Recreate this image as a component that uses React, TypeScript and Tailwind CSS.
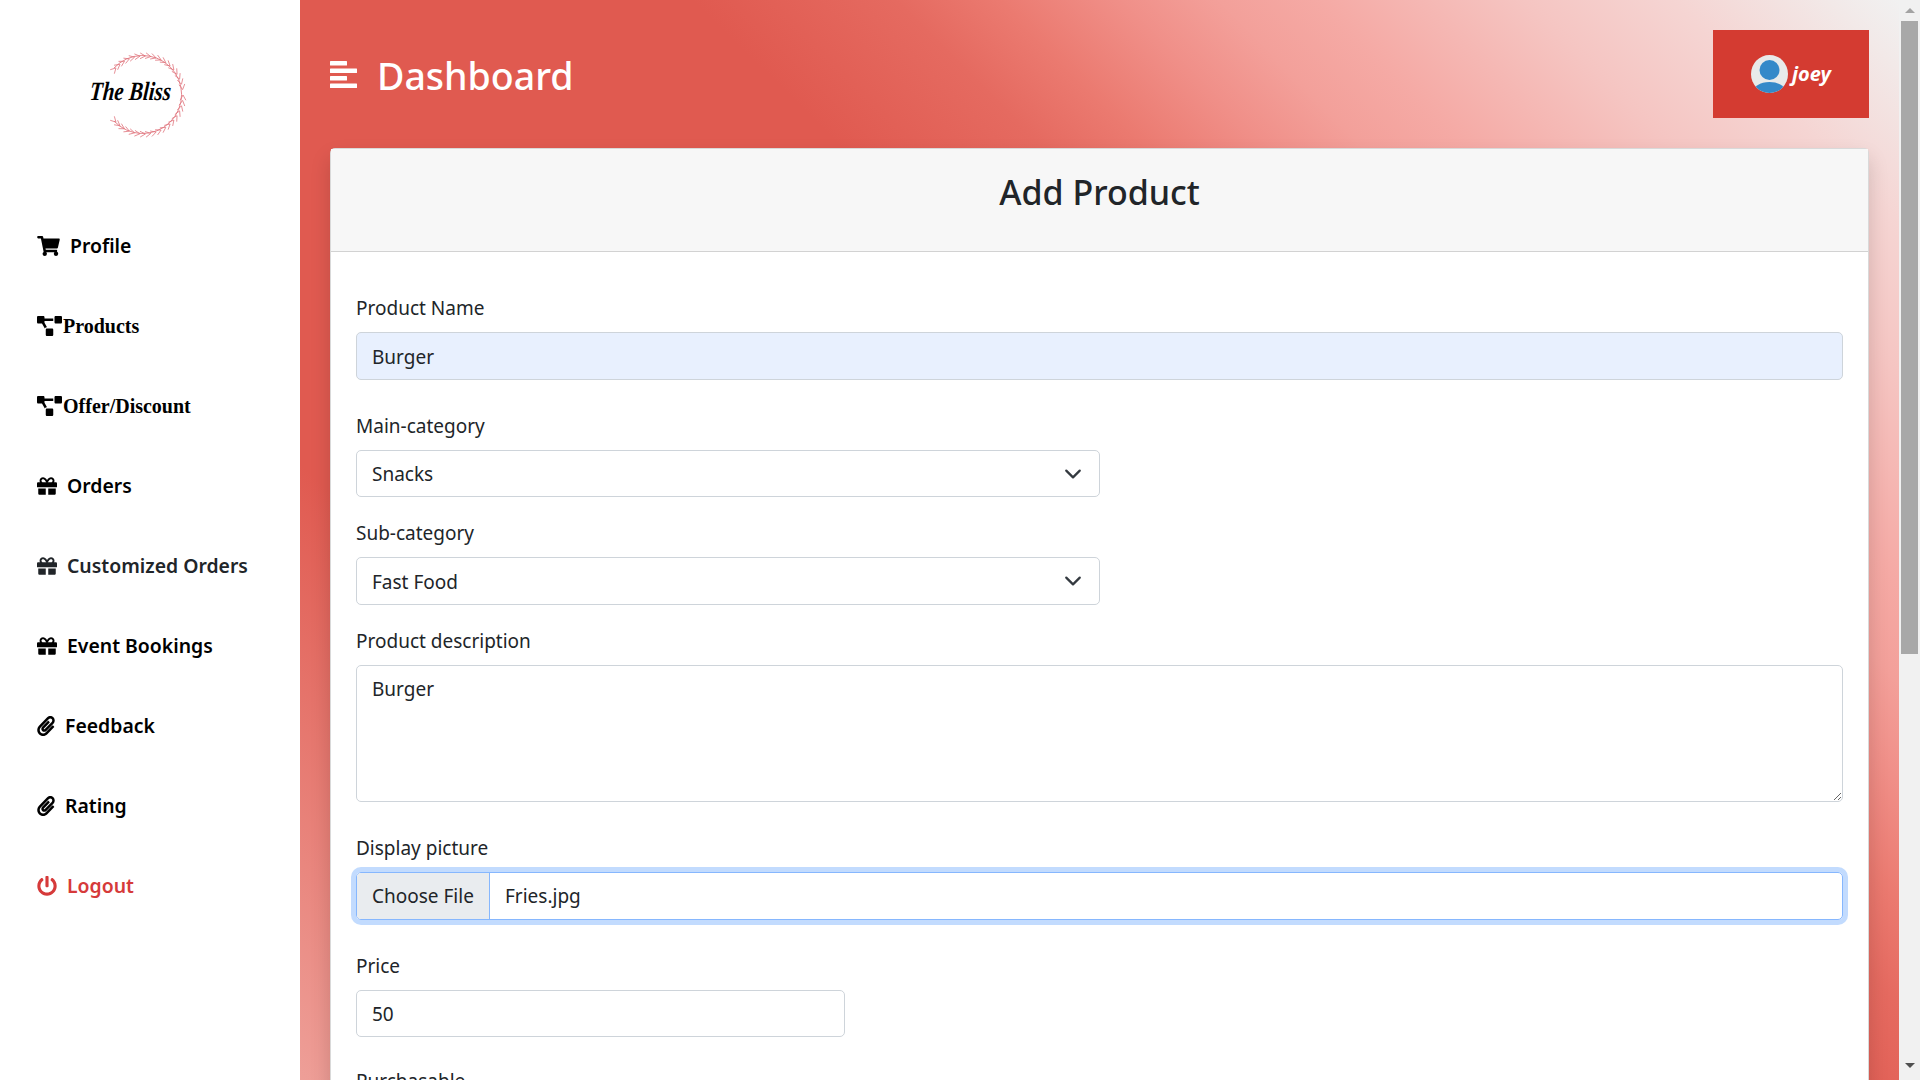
import { FaShoppingCart, FaProjectDiagram, FaGift, FaPaperclip, FaPowerOff } from "react-icons/fa";
import type { ReactNode } from "react";

const UI_FONT = "font-['Noto_Sans',sans-serif]";

// sidebar entries, top to bottom
const NAV = [
  { label: "Profile", icon: <FaShoppingCart className="w-[23px] h-[20px]" />, gap: "gap-[10px]" },
  { label: "Products", icon: <FaProjectDiagram className="w-[25px] h-[20px]" />, gap: "gap-[1px]", serif: true },
  { label: "Offer/Discount", icon: <FaProjectDiagram className="w-[25px] h-[20px]" />, gap: "gap-[1px]", serif: true },
  { label: "Orders", icon: <FaGift className="w-[20px] h-[20px]" />, gap: "gap-[10px]" },
  { label: "Customized Orders", icon: <FaGift className="w-[20px] h-[20px]" />, gap: "gap-[10px]", tone: "text-[#212529]" },
  { label: "Event Bookings", icon: <FaGift className="w-[20px] h-[20px]" />, gap: "gap-[10px]" },
  { label: "Feedback", icon: <FaPaperclip className="w-[18px] h-[20px]" />, gap: "gap-[10px]" },
  { label: "Rating", icon: <FaPaperclip className="w-[18px] h-[20px]" />, gap: "gap-[10px]" },
  { label: "Logout", icon: <FaPowerOff className="w-[20px] h-[20px]" />, gap: "gap-[10px]", tone: "text-[#d63a3a]" },
];

function Wreath() {
  // two branches that start at the right side and grow toward the open left side
  const leaves = [];
  for (let a = -46; a <= 228; a += 8) {
    const r = (a * Math.PI) / 180;
    const px = 54 + 39 * Math.sin(r);
    const py = 45 - 39 * Math.cos(r);
    const back = a < 90 ? Math.PI : 0;
    const len = a % 16 === 0 ? 9 : 6;
    [0.5, -0.5].forEach((s) => {
      const t = r + back + s;
      leaves.push(
        <line key={`${a}${s}`} x1={px} y1={py} x2={px + len * Math.cos(t)} y2={py + len * Math.sin(t)} stroke="#e0747c" strokeWidth="0.8" />
      );
    });
  }
  return (
    <svg viewBox="0 0 100 90" className="absolute inset-0 w-full h-full">
      <path d="M24 18 A39 39 0 1 1 24 71" fill="none" stroke="#d9535d" strokeWidth="0.7" />
      {leaves}
    </svg>
  );
}

function Logo() {
  return (
    <div className="relative w-[100px] h-[90px] ml-[90px]">
      <Wreath />
      <span className="absolute left-0 top-[31px] whitespace-nowrap font-['Liberation_Serif',serif] italic font-bold text-[21px] leading-none text-black -skew-x-6 scale-y-125">
        The Bliss
      </span>
    </div>
  );
}

function Field({ label, mb, children }: { label: string; mb: string; children: ReactNode }) {
  return (
    <div className={mb}>
      <label className="block text-[19px] leading-[30px] mb-[9px] text-[#212529]">{label}</label>
      {children}
    </div>
  );
}

const inputCls = "block w-full h-[47.5px] px-[15px] pt-[2px] text-[19px] text-[#212529] border border-[#ced4da] rounded-[5px] bg-white outline-none";

function SelectBox({ value }: { value: string }) {
  return (
    <div className="relative w-[744px]">
      <select className={`${inputCls} appearance-none`} defaultValue={value}>
        <option>{value}</option>
      </select>
      <svg viewBox="0 0 16 16" className="absolute right-[18px] top-[15px] w-[18px] h-[18px] pointer-events-none">
        <path d="M2 5l6 6 6-6" fill="none" stroke="#343a40" strokeWidth="2" strokeLinecap="round" strokeLinejoin="round" />
      </svg>
    </div>
  );
}

export default function App() {
  return (
    <div className={`flex h-screen overflow-hidden bg-white ${UI_FONT}`}>
      <aside className="w-[300px] shrink-0 bg-white flex flex-col">
        <div className="pt-[50px] h-[206px]">
          <Logo />
        </div>
        <nav className="flex flex-col pl-[37px]">
          {NAV.map((n) => (
            <a key={n.label} className={`flex items-center h-[80px] ${n.tone ?? "text-black"} ${n.gap}`}>
              {n.icon}
              <span className={n.serif ? "font-['Liberation_Serif',serif] font-bold text-[20px]" : "font-semibold text-[19.4px]"}>
                {n.label}
              </span>
            </a>
          ))}
        </nav>
      </aside>

      <main className="flex-1 min-w-0 px-[30px] bg-[linear-gradient(45deg,#ee9f98_0%,#e05a50_23%,#e05a50_55%,#e56a60_62.5%,#eb7a70_66.4%,#f08f88_70.8%,#f3a09a_74.6%,#f5aaa5_78.4%,#f5c5c2_86%,#f5d5d3_91.7%,#f2e9e8_97.4%,#f1f1f1_100%)]">
        <header className="h-[148px] flex justify-between items-start">
          <div className="flex items-center gap-[20px] h-[148px]">
            <svg viewBox="0 0 27 27" className="w-[27px] h-[27px] text-white" fill="currentColor">
              <rect x="0" y="0" width="17" height="4.5" rx="0.5" />
              <rect x="0" y="7.5" width="27" height="4.5" rx="0.5" />
              <rect x="0" y="15" width="17" height="4.5" rx="0.5" />
              <rect x="0" y="22.5" width="27" height="4.5" rx="0.5" />
            </svg>
            <h1 className="text-[37.5px] font-medium text-white leading-none pt-[3px]">Dashboard</h1>
          </div>
          <button className="mt-[30px] w-[156px] h-[88px] bg-[#d43b31] flex items-center justify-center gap-[4px] text-white">
            <svg viewBox="0 0 37 38" className="w-[37px] h-[38px]">
              <defs>
                <clipPath id="av">
                  <ellipse cx="18.5" cy="19" rx="18.5" ry="19" />
                </clipPath>
              </defs>
              <g clipPath="url(#av)">
                <rect width="37" height="38" fill="#e8eaea" />
                <circle cx="18.5" cy="15" r="10" fill="#3489c9" />
                <ellipse cx="18.5" cy="38" rx="17" ry="11" fill="#3489c9" />
              </g>
            </svg>
            <span className="italic font-bold text-[20px]">joey</span>
          </button>
        </header>

        <section className="bg-white border border-black/15 rounded-[5px] shadow-[0_10px_20px_rgba(0,0,0,0.15)]">
          <div className="h-[103px] bg-[#f7f7f7] border-b border-black/15 flex items-center justify-center pb-[17px]">
            <h3 className="text-[34px] font-medium text-[#212529] leading-none">Add Product</h3>
          </div>
          <form className="px-[25px] pt-[41px]">
            <Field label="Product Name" mb="mb-[31px]">
              <input readOnly value="Burger" className={`${inputCls} !bg-[#e8f0fe]`} />
            </Field>
            <Field label="Main-category" mb="mb-[21px]">
              <SelectBox value="Snacks" />
            </Field>
            <Field label="Sub-category" mb="mb-[21px]">
              <SelectBox value="Fast Food" />
            </Field>
            <Field label="Product description" mb="mb-[31px]">
              <textarea readOnly value="Burger" className="block w-full h-[137px] px-[15px] pt-[9px] pb-[7px] text-[19px] text-[#212529] border border-[#ced4da] rounded-[5px] outline-none" />
            </Field>
            <Field label="Display picture" mb="mb-[31px]">
              <div className="flex h-[48px] border border-[#86b7fe] rounded-[5px] shadow-[0_0_0_5px_rgba(13,110,253,0.25)] overflow-hidden text-[19px] text-[#212529]">
                <span className="w-[133px] shrink-0 whitespace-nowrap bg-[#e9ecef] border-r border-[#86b7fe] flex items-center pl-[15px] pt-[2px]">Choose File</span>
                <span className="flex items-center pl-[15px] pt-[2px]">Fries.jpg</span>
              </div>
            </Field>
            <Field label="Price" mb="mb-[29px]">
              <input readOnly value="50" className={`${inputCls} !w-[489px]`} />
            </Field>
            <Field label="Purchasable" mb="mb-[20px]">
              <div className="h-[48px]" />
            </Field>
          </form>
        </section>
      </main>

      {/* scrollbar is part of the picture, drawn by hand so it always shows */}
      <div className="w-[21px] shrink-0 bg-[#f1f1f1] flex flex-col items-center pt-[8px]">
        <div className="h-[13px] flex justify-center">
          <div className="w-0 h-0 border-l-[5px] border-r-[5px] border-b-[5px] border-l-transparent border-r-transparent border-b-[#a3a3a3]" />
        </div>
        <div className="w-[17px] h-[633px] bg-[#a8a8a8]" />
        <div className="flex-1" />
        <div className="h-[17px]">
          <div className="w-0 h-0 border-l-[5px] border-r-[5px] border-t-[5px] border-l-transparent border-r-transparent border-t-[#505050]" />
        </div>
      </div>
    </div>
  );
}
